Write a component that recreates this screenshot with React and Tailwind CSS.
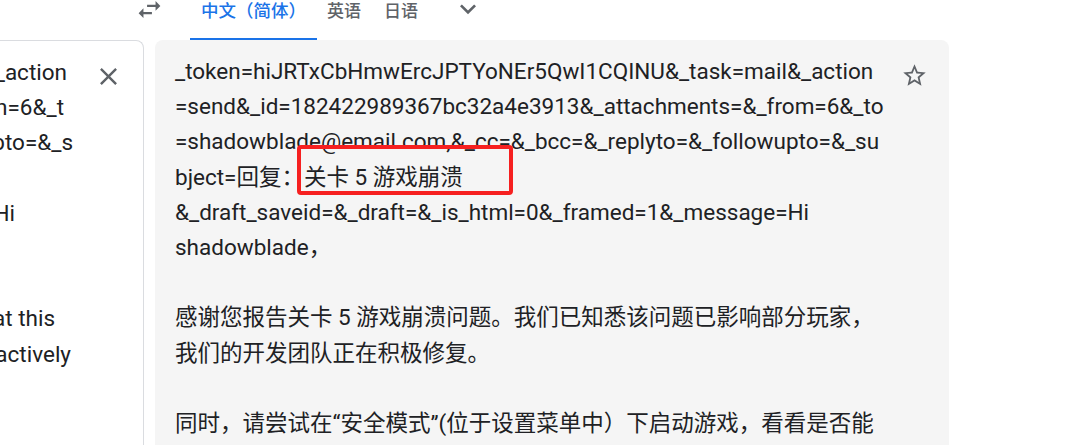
import React from 'react';

const font = { fontFamily: 'Roboto, "Noto Sans CJK SC", sans-serif' };

const SwapIcon = () => (
    <svg viewBox="0 0 24 24" className="w-[29px] h-[29px] -mt-[5px] shrink-0 fill-[#5f6368]">
        <path d="M6.99 11L3 15l3.99 4v-3H14v-2H6.99v-3zM21 9l-3.99-4v3H10v2h7.01v3L21 9z" />
    </svg>
);

const ChevronIcon = () => (
    <svg viewBox="0 0 24 24" className="w-[32px] h-[32px] -mt-[7px] shrink-0 fill-[#5f6368]">
        <path d="M16.59 8.59L12 13.17 7.41 8.59 6 10l6 6 6-6z" />
    </svg>
);

const CloseIcon = () => (
    <svg viewBox="0 0 24 24" className="w-[29px] h-[29px] fill-[#5f6368]">
        <path d="M19 6.41L17.59 5 12 10.59 6.41 5 5 6.41 10.59 12 5 17.59 6.41 19 12 13.41 17.59 19 19 17.59 13.41 12z" />
    </svg>
);

const StarIcon = () => (
    <svg viewBox="0 0 24 24" className="w-[27px] h-[27px] fill-[#5f6368]">
        <path d="M22 9.24l-7.19-.62L12 2 9.19 8.63 2 9.24l5.46 4.73L5.82 21 12 17.27 18.18 21l-1.63-7.03L22 9.24zM12 15.4l-3.76 2.27 1-4.28-3.32-2.88 4.38-.38L12 6.1l1.71 4.04 4.38.38-3.32 2.88 1 4.28L12 15.4z" />
    </svg>
);

// source panel: only the right ends of its lines are in view
const sourceLines = [
    { text: '_token=hiJRTxCbHmwErcJPTYoNEr5QwI1CQINU&_task=mail&_action', pad: 'pr-[76px]' },
    { text: '=send&_id=182422989367bc32a4e3913&_attachments=&_from=6&_t', pad: 'pr-[79px]' },
    { text: 'o=shadowblade@email.com,&_cc=&_bcc=&_replyto=&_followupto=&_s', pad: 'pr-[70px]' },
    { text: '', pad: '' },
    { text: '&_draft_saveid=&_draft=&_is_html=0&_framed=1&_message=Hi', pad: 'pr-[128px]' },
    { text: '', pad: '' },
    { text: '', pad: '' },
    { text: 'Thank you for reporting the Level 5 game crash. We are aware that this', pad: 'pr-[88px]' },
    { text: 'issue is affecting some players, and our development team is actively', pad: 'pr-[72px]' },
];

const targetLines = [
    '_token=hiJRTxCbHmwErcJPTYoNEr5QwI1CQINU&_task=mail&_action',
    '=send&_id=182422989367bc32a4e3913&_attachments=&_from=6&_to',
    '=shadowblade@email.com,&_cc=&_bcc=&_replyto=&_followupto=&_su',
    'bject=回复：关卡 5 游戏崩溃',
    '&_draft_saveid=&_draft=&_is_html=0&_framed=1&_message=Hi',
    'shadowblade，',
    '',
    '感谢您报告关卡 5 游戏崩溃问题。我们已知悉该问题已影响部分玩家，',
    '我们的开发团队正在积极修复。',
    '',
    '同时，请尝试在“安全模式”(位于设置菜单中）下启动游戏，看看是否能',
];

export default function App() {
    return (
        <div className="w-[1089px] h-[445px] bg-white overflow-hidden flex flex-col" style={font}>
            <div className="flex items-start h-[40px] shrink-0 pl-[135px]">
                <SwapIcon />
                <div className="ml-[26px] w-[127px] h-[40px] border-b-2 border-[#1a73e8] flex justify-center pt-[1px]">
                    <span className="text-[17.5px] leading-[20px] font-medium text-[#1a73e8]">中文（简体）</span>
                </div>
                <span className="ml-[10px] pt-[1px] text-[17px] leading-[20px] font-medium text-[#5f6368]">英语</span>
                <span className="ml-[23px] pt-[1px] text-[17px] leading-[20px] font-medium text-[#5f6368]">日语</span>
                <div className="ml-[34px]">
                    <ChevronIcon />
                </div>
            </div>

            <div className="flex flex-1 gap-[11px] min-h-0">
                <div className="relative w-[144px] shrink-0 bg-white border-t border-r border-[#dadce0] rounded-tr-[8px] overflow-hidden pt-[14px] text-[22.5px] leading-[35.2px] text-[#202124]">
                    {sourceLines.map((line, i) => (
                        <div key={i} className={`flex justify-end h-[35.2px] ${line.pad}`}>
                            <span className="whitespace-nowrap shrink-0">{line.text}</span>
                        </div>
                    ))}
                    <div className="absolute left-[94px] top-[21px]">
                        <CloseIcon />
                    </div>
                </div>

                <div className="relative w-[794px] shrink-0 bg-[#f5f5f5] rounded-t-[8px] pl-[20px] pt-[14px] text-[22.5px] leading-[35.2px] text-[#202124]">
                    {targetLines.map((line, i) => (
                        <div key={i} className="h-[35.2px] whitespace-nowrap">{line}</div>
                    ))}
                    <div className="absolute right-[21px] top-[22px]">
                        <StarIcon />
                    </div>
                    <div className="absolute left-[142px] top-[105px] w-[216px] h-[50px] border-4 border-[#f62020] rounded-[4px]"></div>
                </div>
            </div>
        </div>
    );
}
